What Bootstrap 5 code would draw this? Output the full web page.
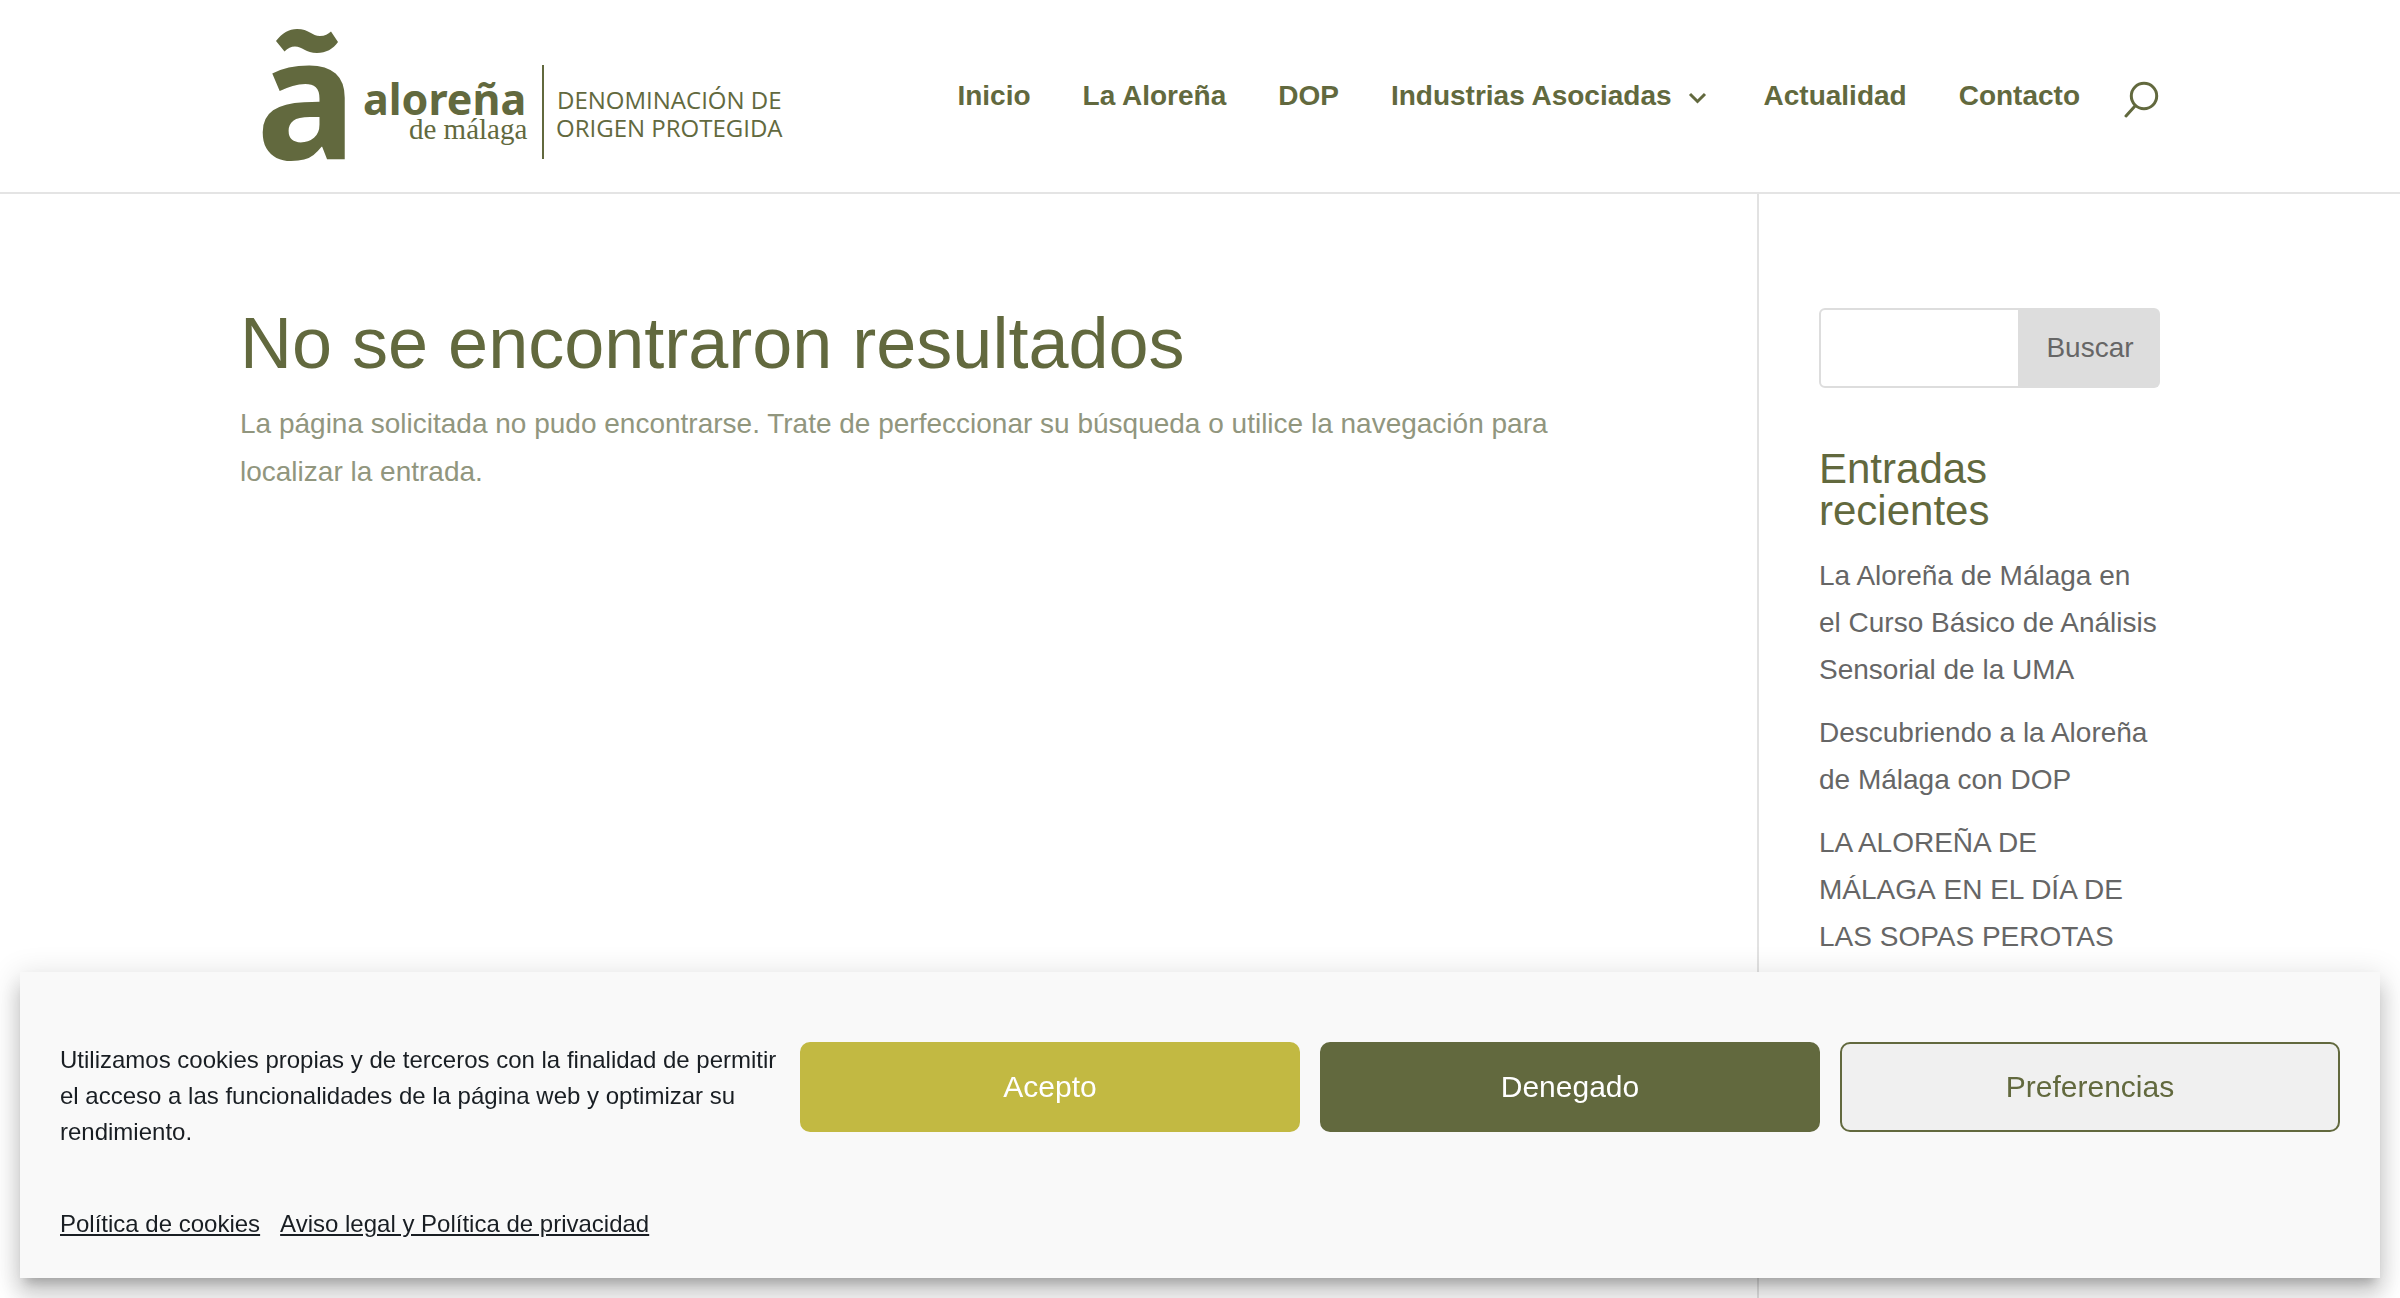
<!DOCTYPE html>
<html lang="es">
<head>
<meta charset="utf-8">
<meta name="viewport" content="width=device-width, initial-scale=1">
<title>Página no encontrada | Aloreña de Málaga</title>
<link rel="stylesheet" href="https://cdn.jsdelivr.net/npm/bootstrap@5.3.0/dist/css/bootstrap.min.css">
<style>
  :root { --olive: #62693e; --lime: #c2b942; }
  body { font-family: "Liberation Sans", Arial, sans-serif; font-size: 28px; color: #666; background: #fff; text-rendering: optimizeLegibility; }
  h1, h2, a { color: var(--olive); }
  .site-wrap { width: 80%; margin: 0 auto; }
  .site-header { border-bottom: 2px solid #e4e4e4; }
  .site-header .navbar-brand { padding: 0; margin: 0; }
  .main-menu { gap: 52px; }
  .main-menu .nav-link { padding: 0; font-weight: 700; line-height: 42px; color: var(--olive); white-space: nowrap; }
  .find-btn { margin-left: 44px; }
  .page-body { min-height: calc(100vh - 194px); }
  .page-main { padding: 114px 104px 0 0; }
  .page-main h1 { font-size: 72px; line-height: 70px; margin-bottom: 22px; }
  .page-main p { line-height: 48px; color: #91967e; }
  .page-side { flex: 0 0 403px; padding: 114px 0 0 60px; border-left: 2px solid #e2e2e2; }
  .side-search { height: 80px; margin-bottom: 60px; }
  .side-search .form-control { border: 2px solid #ddd; border-radius: 6px; font-size: 28px; }
  .side-search .btn { flex: 0 0 140px; font-size: 28px; color: #666; background: #ddd; border: 0; border-radius: 6px; }
  .page-side h2 { font-size: 42px; line-height: 42px; margin-bottom: 20px; }
  .page-side li { line-height: 47px; margin-bottom: 16px; }
  .page-side li a { color: #666; text-decoration: none; }
  .consent { margin: 20px; padding: 70px 40px 36px; background: #f9f9f9; color: #191e23; font-size: 24px; line-height: 36px;
    box-shadow: 0 10px 10px -6px rgba(0,0,0,.2), 0 16px 20px 2px rgba(0,0,0,.14), 0 6px 28px 4px rgba(0,0,0,.12); }
  .consent-row { gap: 20px; margin-bottom: 56px; }
  .consent-row p { flex: 1 1 0; }
  .consent-row .btn { flex: 0 0 500px; height: 90px; padding: 0 12px 2px; font-size: 30px; border: 2px solid var(--olive); border-radius: 10px; }
  .btn-accept { background: var(--lime); border-color: var(--lime) !important; color: #fff; }
  .btn-deny { background: var(--olive); color: #fff; }
  .btn-prefs { background: #f0f0f0; color: var(--olive); }
  .consent-links { gap: 20px; }
  .consent-links a { color: #191e23; }
</style>
<script src="https://cdn.jsdelivr.net/npm/bootstrap@5.3.0/dist/js/bootstrap.bundle.min.js"></script>
</head>
<body>
<header class="site-header">
  <nav class="navbar p-0 site-wrap flex-nowrap justify-content-between align-items-center" aria-label="Principal">
    <a class="navbar-brand d-block" href="#" aria-label="Aloreña de Málaga">
      <svg class="d-block overflow-visible" width="560" height="192" viewBox="240 0 560 192" fill="#62693e">
        <path d="M276 41C282 33 289 29 297 29C309 29 312 36 320 36C325 36 328 34 331 31.500L338 42C333 49 326 53 317 53C306 53 302 46.500 295 46.500C291 46.500 288 48 284.500 51.500Z"/>
        <text x="256" y="159" font-family="Noto Sans, sans-serif" font-weight="700" font-size="168">a</text>
        <text x="363" y="115" font-family="Noto Sans, sans-serif" font-weight="700" font-size="43">aloreña</text>
        <text x="409" y="139" font-family="Liberation Serif, serif" font-size="29">de málaga</text>
        <rect x="542" y="65" width="2" height="94"/>
        <text x="557" y="109" font-family="Open Sans, sans-serif" font-size="24">DENOMINACIÓN DE</text>
        <text x="556" y="137" font-family="Open Sans, sans-serif" font-size="24">ORIGEN PROTEGIDA</text>
      </svg>
    </a>
    <div class="d-flex align-items-center">
      <ul class="main-menu nav flex-nowrap">
        <li><a class="nav-link" href="#">Inicio</a></li>
        <li><a class="nav-link" href="#">La Aloreña</a></li>
        <li><a class="nav-link" href="#">DOP</a></li>
        <li><a class="nav-link d-flex align-items-center" href="#">Industrias Asociadas
          <svg width="40" height="18" viewBox="0 0 40 18" fill="none" stroke="currentColor" stroke-width="3" aria-hidden="true"><path d="M18 7l7.500 7.500L33 7"/></svg></a></li>
        <li><a class="nav-link" href="#">Actualidad</a></li>
        <li><a class="nav-link" href="#">Contacto</a></li>
      </ul>
      <button class="find-btn btn p-0 border-0" type="button" aria-label="Buscar en el sitio">
        <svg class="d-block" width="36" height="44" viewBox="0 0 36 44" fill="none" stroke="#62693e" stroke-width="3" stroke-linecap="round"><circle cx="20" cy="22" r="12.700"/><path d="M11 32L2 42"/></svg>
      </button>
    </div>
  </nav>
</header>

<div class="page-body site-wrap d-flex">
  <main class="page-main flex-fill">
    <h1 class="fw-normal">No se encontraron resultados</h1>
    <p>La página solicitada no pudo encontrarse. Trate de perfeccionar su búsqueda o utilice la navegación para localizar la entrada.</p>
  </main>
  <aside class="page-side">
    <form class="side-search input-group flex-nowrap" role="search">
      <input class="form-control shadow-none" type="text" aria-label="Buscar">
      <button class="btn ms-0" type="button">Buscar</button>
    </form>
    <h2 class="fw-normal">Entradas recientes</h2>
    <ul class="list-unstyled m-0">
      <li><a href="#">La Aloreña de Málaga en el&nbsp;Curso Básico de Análisis Sensorial de la UMA</a></li>
      <li><a href="#">Descubriendo a la Aloreña de Málaga con DOP</a></li>
      <li><a href="#">LA ALOREÑA DE MÁLAGA&nbsp;EN EL DÍA DE LAS&nbsp;SOPAS PEROTAS</a></li>
    </ul>
  </aside>
</div>

<section class="consent fixed-bottom" role="dialog" aria-label="Consentimiento de cookies">
  <div class="consent-row d-flex align-items-start">
    <p class="m-0">Utilizamos cookies propias y de terceros con la finalidad de permitir el acceso a las funcionalidades de la página web y optimizar su rendimiento.</p>
    <button class="btn btn-accept" type="button">Acepto</button>
    <button class="btn btn-deny" type="button">Denegado</button>
    <button class="btn btn-prefs" type="button">Preferencias</button>
  </div>
  <div class="consent-links d-flex">
    <a href="#">Política de cookies</a>
    <a href="#">Aviso legal y Política de privacidad</a>
  </div>
</section>
</body>
</html>
